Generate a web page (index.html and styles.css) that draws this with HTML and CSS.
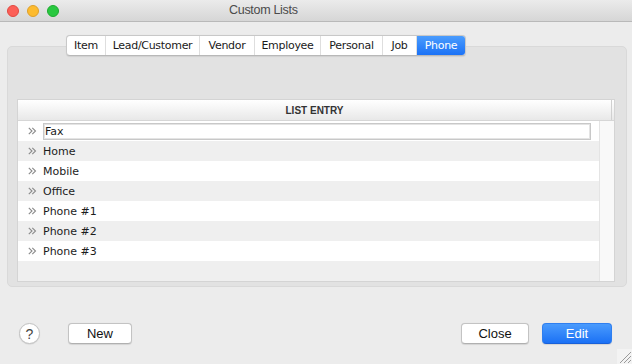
FILE: index.html
```html
<!DOCTYPE html>
<html>
<head>
<meta charset="utf-8">
<link rel="stylesheet" href="styles.css">
</head>
<body>
<div class="window">
  <div class="titlebar">
    <div class="lights">
      <span class="light red"></span>
      <span class="light yellow"></span>
      <span class="light green"></span>
    </div>
    <div class="title">Custom Lists</div>
  </div>
  <div class="content">
    <div class="tabs">
      <div class="tab t-item">Item</div>
      <div class="tab t-lead">Lead/Customer</div>
      <div class="tab t-vendor">Vendor</div>
      <div class="tab t-emp">Employee</div>
      <div class="tab t-pers">Personal</div>
      <div class="tab t-job">Job</div>
      <div class="tab t-phone active">Phone</div>
    </div>
    <div class="group">
      <div class="table">
        <div class="thead">
          <div class="th">LIST ENTRY</div>
          <div class="th-end"></div>
        </div>
        <div class="tbody">
          <div class="rows">
            <div class="row odd">
              <svg class="chev" width="9" height="8" viewBox="0 0 9 8"><path d="M0.8 0.8 L4 4 L0.8 7.2 M4.3 0.8 L7.5 4 L4.3 7.2" fill="none" stroke="#8a8a8a" stroke-width="1.1"/></svg>
              <div class="field">Fax</div>
            </div>
            <div class="row even">
              <svg class="chev" width="9" height="8" viewBox="0 0 9 8"><path d="M0.8 0.8 L4 4 L0.8 7.2 M4.3 0.8 L7.5 4 L4.3 7.2" fill="none" stroke="#8a8a8a" stroke-width="1.1"/></svg>
              <span class="txt">Home</span>
            </div>
            <div class="row odd">
              <svg class="chev" width="9" height="8" viewBox="0 0 9 8"><path d="M0.8 0.8 L4 4 L0.8 7.2 M4.3 0.8 L7.5 4 L4.3 7.2" fill="none" stroke="#8a8a8a" stroke-width="1.1"/></svg>
              <span class="txt">Mobile</span>
            </div>
            <div class="row even">
              <svg class="chev" width="9" height="8" viewBox="0 0 9 8"><path d="M0.8 0.8 L4 4 L0.8 7.2 M4.3 0.8 L7.5 4 L4.3 7.2" fill="none" stroke="#8a8a8a" stroke-width="1.1"/></svg>
              <span class="txt">Office</span>
            </div>
            <div class="row odd">
              <svg class="chev" width="9" height="8" viewBox="0 0 9 8"><path d="M0.8 0.8 L4 4 L0.8 7.2 M4.3 0.8 L7.5 4 L4.3 7.2" fill="none" stroke="#8a8a8a" stroke-width="1.1"/></svg>
              <span class="txt">Phone #1</span>
            </div>
            <div class="row even">
              <svg class="chev" width="9" height="8" viewBox="0 0 9 8"><path d="M0.8 0.8 L4 4 L0.8 7.2 M4.3 0.8 L7.5 4 L4.3 7.2" fill="none" stroke="#8a8a8a" stroke-width="1.1"/></svg>
              <span class="txt">Phone #2</span>
            </div>
            <div class="row odd">
              <svg class="chev" width="9" height="8" viewBox="0 0 9 8"><path d="M0.8 0.8 L4 4 L0.8 7.2 M4.3 0.8 L7.5 4 L4.3 7.2" fill="none" stroke="#8a8a8a" stroke-width="1.1"/></svg>
              <span class="txt">Phone #3</span>
            </div>
            <div class="row even"></div>
          </div>
          <div class="scrollcol"></div>
        </div>
      </div>
    </div>
    <div class="actions">
      <div class="help">?</div>
      <button class="btn new">New</button>
      <button class="btn close">Close</button>
      <button class="btn primary edit">Edit</button>
    </div>
  </div>
  <svg class="grip" width="15" height="15" viewBox="0 0 15 15">
    <rect x="0" y="0" width="15" height="15" fill="#f3f3f3"/>
    <path d="M3 14 L14 3 M7 14 L14 7 M11 14 L14 11" stroke="#9a9a9a" stroke-width="1"/>
  </svg>
</div>
</body>
</html>
```
FILE: styles.css
```css
* { box-sizing: border-box; }
html, body { margin: 0; padding: 0; }
body {
  width: 632px;
  height: 364px;
  overflow: hidden;
  background: #ececec;
  font-family: "Liberation Sans", Arial, sans-serif;
}
.window {
  position: relative;
  width: 632px;
  height: 364px;
  display: flex;
  flex-direction: column;
  background: #ececec;
}
.titlebar {
  height: 22px;
  display: flex;
  align-items: center;
  background: linear-gradient(#ebebeb, #d6d6d6);
  border-bottom: 1px solid #b9b9b9;
  flex: none;
}
.lights {
  display: flex;
  gap: 8px;
  padding-left: 7px;
}
.light {
  width: 12px;
  height: 12px;
  border-radius: 50%;
  display: block;
}
.red { background: #fc5f57; border: 1px solid #e14941; }
.yellow { background: #fdbb2e; border: 1px solid #dea02a; }
.green { background: #29c840; border: 1px solid #1eab2f; }
.title {
  margin-left: 170px;
  font-size: 12.5px;
  color: #4b4b4b;
  letter-spacing: -0.3px;
  padding-bottom: 1px;
}
.content {
  flex: 1;
  display: flex;
  flex-direction: column;
  padding: 0 5px 0 7px;
}
.tabs {
  position: relative;
  z-index: 1;
  align-self: flex-start;
  margin: 13px 0 0 59px;
  height: 21px;
  display: flex;
  background: #fff;
  border: 1px solid #c8c8c8;
  border-bottom-color: #b8b8b8;
  border-radius: 4px;
  box-shadow: 0 0.5px 1px rgba(0,0,0,0.08);
  overflow: hidden;
  font-family: "DejaVu Sans", sans-serif;
  font-size: 11px;
  letter-spacing: -0.3px;
  color: #1a1a1a;
}
.tab {
  display: flex;
  align-items: center;
  justify-content: center;
  border-right: 1px solid #dedede;
}
.tab:last-child { border-right: none; }
.t-item { width: 39px; }
.t-lead { width: 94px; }
.t-vendor { width: 55px; }
.t-emp { width: 66px; }
.t-pers { width: 62px; }
.t-job { width: 34px; }
.t-phone { width: 48px; }
.tab.active {
  background: linear-gradient(#4b9cfd, #1b72f6);
  color: #fff;
}
.group {
  margin-top: -10px;
  height: 241px;
  background: #e2e2e2;
  border: 1px solid #d9d9d9;
  border-radius: 5px;
  padding: 52px 11px 5px 9px;
}
.table {
  height: 183px;
  border: 1px solid #d4d4d4;
  background: #fff;
  display: flex;
  flex-direction: column;
}
.thead {
  height: 21px;
  display: flex;
  background: linear-gradient(#ffffff, #e8e8e8);
  border-bottom: 1px solid #d6d6d6;
  flex: none;
}
.th {
  flex: 1;
  display: flex;
  align-items: center;
  justify-content: center;
  font-size: 10px;
  font-weight: bold;
  color: #333;
  border-right: 1px solid #d0d0d0;
}
.th-end { width: 2px; }
.tbody {
  flex: 1;
  display: flex;
}
.rows {
  flex: 1;
  display: flex;
  flex-direction: column;
}
.row {
  height: 20px;
  display: flex;
  align-items: center;
  padding-left: 10px;
  font-family: "DejaVu Sans", sans-serif;
  font-size: 11px;
  color: #1c1c1c;
}
.row.odd { background: #ffffff; }
.row.even { background: #efefef; }
.chev { flex: none; margin-right: 6px; }
.txt { padding-left: 0; }
.field {
  flex: 1;
  height: 17px;
  margin-right: 8px;
  border: 1px solid #c8c8c8;
  box-shadow: inset 0 0 0 1px #e4e4e4;
  background: #fff;
  padding-left: 1px;
  display: flex;
  align-items: center;
}
.scrollcol {
  width: 15px;
  background: #f9f9f9;
  border-left: 1px solid #e4e4e4;
}
.actions {
  display: flex;
  align-items: center;
  margin-top: 36px;
  padding-left: 12px;
  padding-right: 15px;
}
.help {
  width: 21px;
  height: 21px;
  border-radius: 50%;
  background: #fff;
  border: 1px solid #c2c2c2;
  box-shadow: 0 0.5px 1px rgba(0,0,0,0.12);
  display: flex;
  align-items: center;
  justify-content: center;
  font-size: 14px;
  color: #444;
}
.btn {
  height: 21px;
  border: 1px solid #c3c3c3;
  border-bottom-color: #b0b0b0;
  border-radius: 4px;
  background: #fff;
  font-family: "Liberation Sans", Arial, sans-serif;
  font-size: 13px;
  color: #111;
  padding: 0;
  box-shadow: 0 0.5px 1px rgba(0,0,0,0.1);
}
.new { width: 64px; margin-left: 28px; }
.close { width: 68px; margin-left: auto; }
.edit { width: 70px; margin-left: 13px; }
.btn.primary {
  background: linear-gradient(#4a9bfd, #1b71f5);
  border-color: #2f7ff0;
  border-bottom-color: #1960d8;
  color: #fff;
}
.grip {
  position: absolute;
  right: 0;
  bottom: 0;
}
```
